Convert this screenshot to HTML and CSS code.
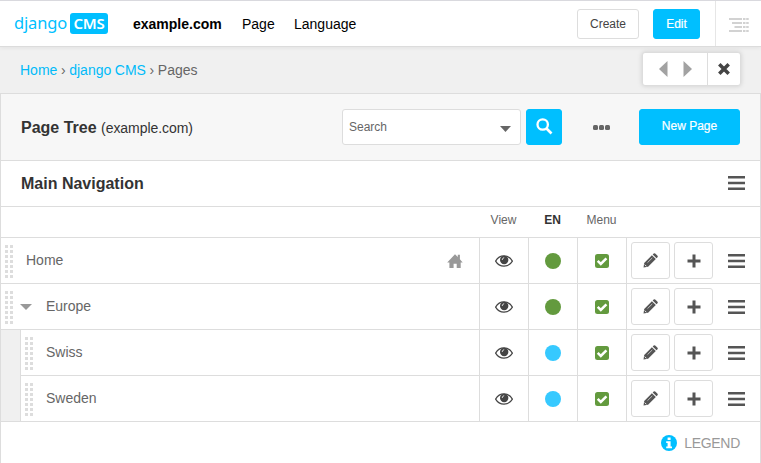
FILE: index.html
```html
<!DOCTYPE html>
<html lang="en">
<head>
<meta charset="utf-8">
<title>Pages</title>
<link rel="stylesheet" href="styles.css">
</head>
<body>
<svg class="sprite" aria-hidden="true">
  <symbol id="eye" viewBox="0 0 18 12"><path d="M.6 6.100C2.600 2.700 5.500 .9 9 .9s6.400 1.800 8.400 5.200C15.400 9.500 12.500 11.100 9 11.100S2.600 9.500.6 6.100Z" fill="#fff" stroke="currentColor" stroke-width="1.200"/><circle cx="9.200" cy="5" r="4.200" fill="currentColor"/><path d="M7.200 4.600Q7.300 3 8.800 2.700" fill="none" stroke="#fff" stroke-width=".8" stroke-linecap="round"/></symbol>
  <symbol id="check" viewBox="0 0 14 14"><rect width="14" height="14" rx="2.500" fill="#639a3e"/><path d="M2.700 6.800 5.800 9.900 11.400 4.300" fill="none" stroke="#fff" stroke-width="2.500"/></symbol>
  <symbol id="pencil" viewBox="0 0 15 15"><path d="M.5 14.500 1.200 9.900 8.900 2.200 12.800 6.100 5.100 13.800Z"/><path d="m9.700 1.500 1-1q.8-.6 1.500 0l2.300 2.300q.6.800 0 1.500l-1 1Z"/><path d="m4.500 9.600 4.800-4.700" fill="none" stroke="#fff" stroke-width=".6"/><path d="m1.700 11.600 1.700 1.700" fill="none" stroke="#fff" stroke-width=".9"/></symbol>
  <symbol id="plus" viewBox="0 0 14 14"><path d="M5.500.5h3v5h5v3h-5v5h-3v-5h-5v-3h5Z"/></symbol>
  <symbol id="menu" viewBox="0 0 17 14"><path d="M0 0h17v2.600H0zM0 5.700h17v2.600H0zM0 11.400h17V14H0z"/></symbol>
  <symbol id="home" viewBox="0 0 16 14"><path d="M8 .2 10.800 3V.8h2.100v4.500L15.700 8.400h-2V14H9.700V9.700H6.600V14H2.400V8.400H.2Z"/></symbol>
</svg>

<header class="toolbar">
  <a class="logo"><span class="logo-word">django</span><span class="logo-badge">CMS</span></a>
  <nav class="nav"><b class="nav-site">example.com</b><span class="nav-page">Page</span><span>Language</span></nav>
  <div class="toolbar-actions">
    <button class="btn create">Create</button>
    <button class="btn primary edit">Edit</button>
    <div class="structure">
      <svg width="20" height="14" viewBox="0 0 20 14" fill="none" stroke="#d2d2d2" stroke-width="1.800"><path d="M0 1h13M3 5h10M5.500 9H13M0 13h13"/><path d="M14 1h6M14 5h6M14 9h6M14 13h6" stroke-dasharray="2.500 .7"/></svg>
    </div>
  </div>
</header>

<div class="crumbs">
  <div class="crumb-text"><a>Home</a> › <a>django CMS</a> › Pages</div>
  <div class="pager">
    <div class="arrows"><svg width="33" height="16" viewBox="0 0 33 16" fill="#a2a2a2"><path d="M8.500 0v16L0 8ZM24.500 0v16L33 8Z"/></svg></div>
    <div class="close"><svg width="12" height="12" viewBox="0 0 12 12" stroke="#444" stroke-width="3.500"><path d="m1.300 1.300 9.400 9.400m0-9.400-9.400 9.400"/></svg></div>
  </div>
</div>

<main class="panel">
  <div class="panel-head">
    <h1>Page Tree <span>(example.com)</span></h1>
    <div class="search"><span>Search</span><svg width="11" height="6" viewBox="0 0 11 6" fill="#666"><path d="M0 0h11L5.500 6Z"/></svg></div>
    <button class="btn primary search-btn"><svg width="17" height="17" viewBox="0 0 17 17" fill="none" stroke="#fff"><circle cx="6.700" cy="6.500" r="5.200" stroke-width="2.300"/><path d="m10.500 10.500 5 5" stroke-width="2.700"/></svg></button>
    <div class="dots"><i></i><i></i><i></i></div>
    <button class="btn primary new-page">New Page</button>
  </div>
  <div class="section-head"><h2>Main Navigation</h2><svg class="menu"><use href="#menu"/></svg></div>
  <div class="columns"><span class="col">View</span><span class="col current">EN</span><span class="col">Menu</span><span class="col-rest"></span></div>

  <div class="row">
    <div class="name"><i class="grip"></i><span class="title root">Home</span><svg class="home"><use href="#home"/></svg></div>
    <div class="cell"><svg class="eye"><use href="#eye"/></svg></div><div class="cell"><i class="dot green"></i></div><div class="cell"><svg class="check"><use href="#check"/></svg></div>
    <div class="actions"><button class="tool"><svg class="pencil"><use href="#pencil"/></svg></button><button class="tool"><svg class="plus"><use href="#plus"/></svg></button><svg class="menu"><use href="#menu"/></svg></div>
  </div>
  <div class="row">
    <div class="name"><i class="grip"></i><svg class="caret" viewBox="0 0 12 6"><path d="M0 0h12L6 6Z"/></svg><span class="title">Europe</span></div>
    <div class="cell"><svg class="eye"><use href="#eye"/></svg></div><div class="cell"><i class="dot green"></i></div><div class="cell"><svg class="check"><use href="#check"/></svg></div>
    <div class="actions"><button class="tool"><svg class="pencil"><use href="#pencil"/></svg></button><button class="tool"><svg class="plus"><use href="#plus"/></svg></button><svg class="menu"><use href="#menu"/></svg></div>
  </div>
  <div class="children">
    <div class="row">
      <div class="name"><i class="grip"></i><span class="title child">Swiss</span></div>
      <div class="cell"><svg class="eye"><use href="#eye"/></svg></div><div class="cell"><i class="dot blue"></i></div><div class="cell"><svg class="check"><use href="#check"/></svg></div>
      <div class="actions"><button class="tool"><svg class="pencil"><use href="#pencil"/></svg></button><button class="tool"><svg class="plus"><use href="#plus"/></svg></button><svg class="menu"><use href="#menu"/></svg></div>
    </div>
    <div class="row">
      <div class="name"><i class="grip"></i><span class="title child">Sweden</span></div>
      <div class="cell"><svg class="eye"><use href="#eye"/></svg></div><div class="cell"><i class="dot blue"></i></div><div class="cell"><svg class="check"><use href="#check"/></svg></div>
      <div class="actions"><button class="tool"><svg class="pencil"><use href="#pencil"/></svg></button><button class="tool"><svg class="plus"><use href="#plus"/></svg></button><svg class="menu"><use href="#menu"/></svg></div>
    </div>
  </div>
  <footer class="legend"><svg width="16" height="16" viewBox="0 0 16 16"><circle cx="8" cy="8" r="8" fill="#00bfff"/><path d="M6.600 2.500h3v2.600h-3zM5.200 6.200h4.400v5.300H11v1.800H5.200v-1.800h1.400V8H5.200Z" fill="#fff"/></svg><span>LEGEND</span></footer>
</main>
</body>
</html>
```
FILE: styles.css
```css
* { box-sizing: border-box; }
body {
  margin: 0;
  height: 463px;
  overflow: hidden;
  display: flex;
  flex-direction: column;
  background: #f0f0f0;
  color: #666;
  font: 14px/20px "Liberation Sans", Arial, sans-serif;
}
svg { display: block; flex: none; }
.sprite { position: absolute; width: 0; height: 0; }
button { padding: 0; font: inherit; }

.toolbar {
  flex: none;
  display: flex;
  align-items: center;
  height: 47px;
  padding-left: 14px;
  background: #fff;
  border-top: 1px solid #d9d9de;
  border-bottom: 1px solid #dcdcdc;
  box-shadow: 0 1px 4px rgba(0, 0, 0, .06);
  color: #000;
}
.logo { display: flex; width: 119px; align-items: center; font-family: "Noto Sans", sans-serif; }
.logo-word { width: 56px; color: #00bfff; font-size: 16.500px; line-height: 20px; letter-spacing: -.15px; padding-bottom: 1px; }
.logo-badge {
  width: 38px;
  height: 21px;
  border-radius: 3px;
  background: #00bfff;
  color: #fff;
  font-size: 15px;
  font-weight: 600;
  line-height: 21px;
  text-align: center;
  letter-spacing: -.3px;
}
.nav { display: flex; padding-top: 1px; }
.nav-site { width: 109px; }
.nav-page { width: 52px; }
.toolbar-actions { display: flex; align-items: center; align-self: stretch; margin-left: auto; }
.btn { flex: none; border: 1px solid #ddd; border-radius: 3px; background: #fff; color: #444; font-size: 12px; }
.primary { border-color: #00bfff; background: #00bfff; color: #fff; -webkit-text-stroke: .2px; }
.create { width: 62px; height: 30px; margin-right: 14px; padding-top: 1px; }
.edit { width: 47px; height: 30px; margin-right: 15px; padding-top: 1px; }
.structure { display: flex; align-items: center; align-self: stretch; width: 46px; padding: 3px 0 0 13px; border-left: 1px solid #e6e6e6; }

.crumbs { flex: none; display: flex; justify-content: space-between; height: 46px; padding: 5px 20px 0; }
.crumb-text { padding-top: 8px; word-spacing: -.3px; }
.crumbs a { color: #00bbf9; }
.pager { display: flex; width: 99px; height: 34px; border: 1px solid #ddd; border-radius: 3px; background: #fff; box-shadow: 0 0 5px rgba(0, 0, 0, .15); }
.arrows { display: flex; align-items: center; justify-content: center; width: 65px; border-right: 1px solid #ddd; }
.close { display: flex; flex: 1; align-items: center; justify-content: center; }

.panel { flex: 1; border: 1px solid #ddd; border-bottom: 0; background: #fff; }
.panel-head { display: flex; align-items: center; height: 67px; padding: 0 20px; border-bottom: 1px solid #ddd; background: #f7f7f7; }
h1, h2 { margin: 0; color: #333; font-size: 16px; font-weight: 700; white-space: nowrap; }
h1 { flex: 1; padding-top: 2px; }
h1 span { font-size: 14px; font-weight: 400; letter-spacing: -.05px; }
.search { display: flex; align-items: center; justify-content: space-between; width: 179px; height: 36px; margin-right: 5px; padding: 0 9px 0 6px; border: 1px solid #ddd; border-radius: 3px; background: #fff; font-size: 12px; }
.search svg { margin-top: 4px; }
.search-btn { display: flex; align-items: center; justify-content: center; width: 36px; height: 36px; padding-bottom: 2px; }
.dots { display: flex; width: 77px; padding: 0 0 0 31px; gap: 1px; }
.dots i { width: 5px; height: 5px; border-radius: 1.500px; background: #666; }
.new-page { width: 101px; height: 36px; padding-bottom: 3px; }
.section-head { display: flex; align-items: center; justify-content: space-between; height: 46px; padding: 0 15px 0 20px; border-bottom: 1px solid #ddd; }
.section-head .menu { margin-bottom: 1px; }
.menu { width: 17px; height: 14px; fill: #555; }

.columns { display: flex; justify-content: flex-end; height: 31px; padding-top: 3px; border-bottom: 1px solid #ddd; font-size: 12px; }
.col { width: 49px; text-align: center; }
.col-rest { width: 134px; }
.current { color: #333; font-weight: 700; }

.row { display: flex; height: 46px; border-bottom: 1px solid #ddd; }
.name { display: flex; flex: 1; align-items: center; padding-left: 4px; }
.grip {
  flex: none;
  width: 8px;
  height: 33px;
  margin-top: 2px;
  background-image: linear-gradient(to bottom, transparent 3px, #fff 3px), linear-gradient(to right, #ddd 3px, transparent 3px);
  background-size: 5px 5px;
}
.title { margin-left: 14px; padding-bottom: 1px; }
.root { margin-left: 13px; }
.child { margin-left: 13px; }
.caret { width: 12px; height: 6px; margin-left: 7px; fill: #999; }
.home { width: 16px; height: 14px; margin: 0 16px 0 auto; fill: #999; }
.cell { display: flex; align-items: center; justify-content: center; width: 49px; border-left: 1px solid #ddd; }
.eye { width: 18px; height: 12px; color: #444; }
.dot { width: 16px; height: 16px; border-radius: 50%; }
.green { background: #639a3e; }
.blue { background: #36c9ff; }
.check { width: 14px; height: 14px; }
.actions { display: flex; align-items: center; width: 134px; padding-left: 4px; border-left: 1px solid #ddd; }
.tool { display: flex; align-items: center; justify-content: center; width: 39px; height: 37px; margin-right: 4px; border: 1px solid #ddd; border-radius: 3px; background: #fff; }
.pencil { width: 15px; height: 15px; fill: #555; }
.plus { width: 14px; height: 14px; fill: #555; }
.actions .menu { margin-left: 11px; }
.children { padding-left: 19px; background: #f0f0f0; border-bottom: 1px solid #ddd; }
.children .row { border-left: 1px solid #ddd; background: #fff; }
.children .row:last-child { height: 45px; border-bottom: 0; }

.legend { display: flex; align-items: center; justify-content: flex-end; height: 42px; padding-right: 20px; gap: 7px; color: #999; letter-spacing: -.3px; }
```
